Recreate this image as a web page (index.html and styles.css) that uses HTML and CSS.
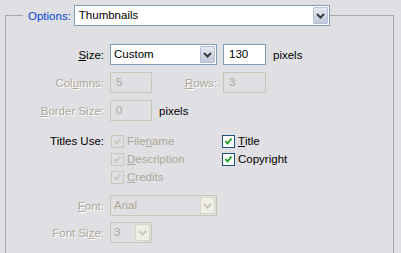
FILE: index.html
```html
<!DOCTYPE html>
<html lang="en">
<head>
    <meta charset="UTF-8">
    <title>Options</title>
    <link rel="stylesheet" href="styles.css">
</head>
<body>
    <fieldset class="options">
        <legend class="options-head">
            <span class="options-title">Options:</span>
            <span class="combo combo-wide">
                <span class="combo-text">Thumbnails</span>
                <span class="combo-btn"><svg width="9" height="6" viewBox="0 0 9 6"><polyline points="1,1 4.5,4.5 8,1" /></svg></span>
            </span>
        </legend>

        <!-- size / columns / border -->
        <div class="rows">
            <div class="row">
                <span class="field-label"><u>S</u>ize:</span>
                <span class="combo combo-size">
                    <span class="combo-text">Custom</span>
                    <span class="combo-btn"><svg width="9" height="6" viewBox="0 0 9 6"><polyline points="1,1 4.5,4.5 8,1" /></svg></span>
                </span>
                <span class="textbox textbox-gap">130</span>
                <span class="unit">pixels</span>
            </div>
            <div class="row">
                <span class="field-label off">Col<u>u</u>mns:</span>
                <span class="textbox textbox-small off">5</span>
                <span class="field-label-2 off"><u>R</u>ows:</span>
                <span class="textbox off">3</span>
            </div>
            <div class="row">
                <span class="field-label off"><u>B</u>order Size:</span>
                <span class="textbox textbox-small off">0</span>
                <span class="unit">pixels</span>
            </div>
        </div>

        <!-- titles -->
        <div class="titles">
            <span class="field-label titles-label">Titles Use:</span>
            <div class="checks checks-left">
                <span class="check off"><span class="check-box"><svg width="11" height="11" viewBox="0 0 11 11"><polyline points="2.5,5 4.5,7.5 8.5,2.5" /></svg></span>File<u>n</u>ame</span>
                <span class="check off"><span class="check-box"><svg width="11" height="11" viewBox="0 0 11 11"><polyline points="2.5,5 4.5,7.5 8.5,2.5" /></svg></span><u>D</u>escription</span>
                <span class="check off"><span class="check-box"><svg width="11" height="11" viewBox="0 0 11 11"><polyline points="2.5,5 4.5,7.5 8.5,2.5" /></svg></span><u>C</u>redits</span>
            </div>
            <div class="checks">
                <span class="check"><span class="check-box"><svg width="11" height="11" viewBox="0 0 11 11"><polyline points="2.5,5 4.5,7.5 8.5,2.5" /></svg></span><u>T</u>itle</span>
                <span class="check"><span class="check-box"><svg width="11" height="11" viewBox="0 0 11 11"><polyline points="2.5,5 4.5,7.5 8.5,2.5" /></svg></span>Copyright</span>
            </div>
        </div>

        <!-- font -->
        <div class="rows rows-font">
            <div class="row">
                <span class="field-label off"><u>F</u>ont:</span>
                <span class="combo combo-size off">
                    <span class="combo-text">Arial</span>
                    <span class="combo-btn"><svg width="9" height="6" viewBox="0 0 9 6"><polyline points="1,1 4.5,4.5 8,1" /></svg></span>
                </span>
            </div>
            <div class="row">
                <span class="field-label off">Font Si<u>z</u>e:</span>
                <span class="combo combo-small off">
                    <span class="combo-text">3</span>
                    <span class="combo-btn"><svg width="9" height="6" viewBox="0 0 9 6"><polyline points="1,1 4.5,4.5 8,1" /></svg></span>
                </span>
            </div>
        </div>
    </fieldset>
</body>
</html>
```

FILE: styles.css
```css
html, body {
    margin: 0;
    padding: 0;
    height: 100%;
    overflow: hidden;
    background: #e0dfe3;
}

body {
    font-family: "Liberation Sans", Arial, sans-serif;
    font-size: 11.5px;
    color: #000;
}

u {
    text-decoration: underline;
    text-underline-offset: 1px;
}

/* group frame, runs off the bottom edge */
.options {
    margin: 5px 0 0 5px;
    padding: 0;
    width: 389px;
    height: 248px;
    box-sizing: border-box;
    border: 1px solid #a7a6aa;
    border-bottom: none;
}

.options-head {
    margin-left: 17px;
    padding: 0 0 0 5px;
    display: flex;
    align-items: center;
    gap: 3px;
}

.options-title {
    color: #0046d5;
}

/* combo boxes */
.combo {
    display: flex;
    height: 21px;
    box-sizing: border-box;
    border: 1px solid #7f9db9;
    background: #fff;
}

.combo-wide {
    width: 256px;
}

.combo-size {
    width: 107px;
}

.combo-small {
    width: 42px;
}

.combo-text {
    flex: 1;
    padding-left: 3px;
    line-height: 19px;
}

.combo-wide .combo-text {
    padding-left: 4px;
}

.combo-btn {
    width: 15px;
    margin: 1px;
    box-sizing: border-box;
    border: 1px solid #b5c0d8;
    border-radius: 1px;
    background: linear-gradient(#e4e8f2, #c2c9da);
    display: flex;
    align-items: center;
    justify-content: center;
}

.combo-btn polyline {
    fill: none;
    stroke: #3a3a3a;
    stroke-width: 2;
}

.combo.off {
    border-color: #c9c7ba;
    background: transparent;
    color: #aca899;
}

.combo.off .combo-btn {
    border-color: #d8d5c9;
    background: #eeede6;
}

.combo.off .combo-btn polyline {
    stroke: #c9c7ba;
}

/* rows */
.rows {
    padding-top: 18px;
    display: flex;
    flex-direction: column;
    gap: 7px;
}

.rows-font {
    padding-top: 9px;
    gap: 6px;
}

.row {
    display: flex;
    align-items: center;
    height: 21px;
}

.field-label {
    width: 98px;
    margin-right: 6px;
    text-align: right;
}

.field-label-2 {
    width: 65px;
    margin-right: 6px;
    text-align: right;
}

.off {
    color: #aca899;
}

.field-label.off, .field-label-2.off {
    text-shadow: 1px 1px 0 #fff;
}

.textbox {
    width: 43px;
    height: 21px;
    box-sizing: border-box;
    border: 1px solid #7f9db9;
    background: #fff;
    padding-left: 5px;
    line-height: 19px;
}

.textbox-gap {
    margin-left: 6px;
}

.textbox-small {
    width: 42px;
}

.textbox.off {
    border-color: #c9c7ba;
    background: transparent;
}

.unit {
    margin-left: 7px;
}

/* titles */
.titles {
    margin-top: 11px;
    display: flex;
    align-items: flex-start;
}

.titles-label {
    line-height: 18px;
    margin-right: 7px;
}

.checks {
    display: flex;
    flex-direction: column;
}

.checks-left {
    width: 111px;
}

.check {
    display: flex;
    align-items: center;
    height: 18px;
}

.check-box {
    width: 13px;
    height: 13px;
    box-sizing: border-box;
    border: 1px solid #1c5180;
    background: #fff;
    margin-right: 3px;
    display: flex;
}

.check-box polyline {
    fill: none;
    stroke: #21a121;
    stroke-width: 2;
}

.check.off .check-box {
    border-color: #cac8bb;
    background: transparent;
}

.check.off .check-box polyline {
    stroke: #cac8bb;
}
```
